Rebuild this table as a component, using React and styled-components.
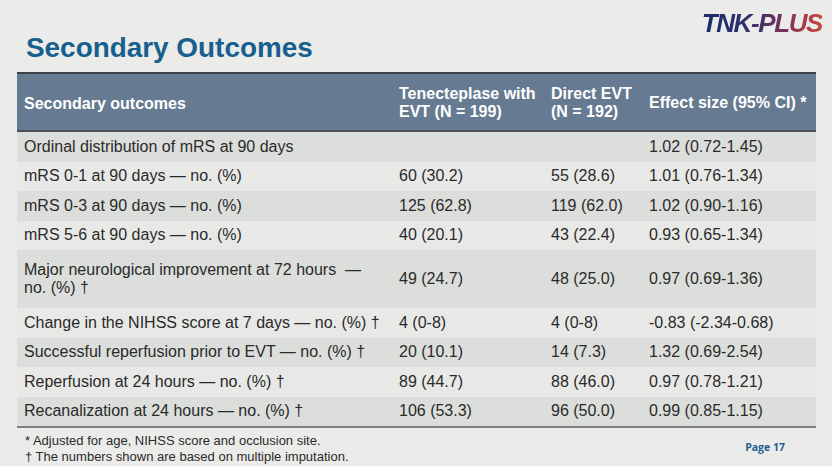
import React from "react";
import styled, { createGlobalStyle } from "styled-components";

const Global = createGlobalStyle`
  html, body { margin: 0; padding: 0; }
  body {
    background: #ebece9;
    font-family: "Liberation Sans", Arial, sans-serif;
    -webkit-font-smoothing: antialiased;
  }
`;

const Page = styled.div`
  width: 832px;
  height: 466px;
  box-sizing: border-box;
  padding: 0 16px 0 17px;
  background: linear-gradient(90deg, #efe7e9 0px, #ebece9 4px);
  overflow: hidden;
`;

const TopBar = styled.header`
  height: 72px;
  display: flex;
  justify-content: space-between;
  align-items: flex-start;
`;

const Title = styled.h1`
  margin: 0;
  padding: 32px 0 0 9px;
  font-size: 27.9px;
  line-height: 32px;
  font-weight: 700;
  color: #175f8e;
`;

const Logo = styled.div`
  margin: 10px -6px 0 0;
  font-size: 26px;
  line-height: 26px;
  font-weight: 700;
  font-style: italic;
  letter-spacing: -1.4px;
  background: linear-gradient(
    90deg,
    #1c2a6c 0%,
    #282d6e 28%,
    #4a2f66 50%,
    #7d3257 70%,
    #a83a47 86%,
    #c7483c 100%
  );
  -webkit-background-clip: text;
  background-clip: text;
  color: transparent;
`;

const Table = styled.div`
  display: grid;
  grid-template-columns: 375px 152px 98px 1fr;
  border-bottom: 2px solid #7c7f80;
`;

const HeadRow = styled.div`
  display: contents;
`;

const HeadCell = styled.div`
  background: #667a91;
  border-top: 2px solid #3e4247;
  border-bottom: 2px solid #4a5056;
  height: 56px;
  box-sizing: content-box;
  display: flex;
  align-items: center;
  padding: 0 0 0 7px;
  color: #ffffff;
  font-size: 16px;
  font-weight: 700;
  line-height: 18px;
  span { padding-top: ${(p) => (p.$low ? "4px" : "1px")}; }
`;

const Cell = styled.div`
  background: ${(p) => (p.$shade ? "#dcdedb" : "#e8e9e7")};
  min-height: ${(p) => (p.$tall ? "58px" : "29.5px")};
  display: flex;
  align-items: center;
  padding-left: 7px;
  font-size: 16px;
  line-height: 18.5px;
  color: #2a2a2a;
  white-space: nowrap;
`;

const Footer = styled.footer`
  display: flex;
  justify-content: space-between;
  align-items: flex-start;
  padding: 4.5px 31px 0 8px;
`;

const Notes = styled.div`
  font-size: 13px;
  line-height: 16.5px;
  color: #2a2a2a;
`;

const PageNo = styled.div`
  margin-top: 7px;
  font-family: "Open Sans", "Noto Sans", sans-serif;
  font-size: 10.5px;
  font-weight: 700;
  color: #1f5f93;
`;

const rows = [
  ["Ordinal distribution of mRS at 90 days", "", "", "1.02 (0.72-1.45)"],
  ["mRS 0-1 at 90 days — no. (%)", "60 (30.2)", "55 (28.6)", "1.01 (0.76-1.34)"],
  ["mRS 0-3 at 90 days — no. (%)", "125 (62.8)", "119 (62.0)", "1.02 (0.90-1.16)"],
  ["mRS 5-6 at 90 days — no. (%)", "40 (20.1)", "43 (22.4)", "0.93 (0.65-1.34)"],
  [
    <>Major neurological improvement at 72 hours &nbsp;—<br />no. (%) †</>,
    "49 (24.7)",
    "48 (25.0)",
    "0.97 (0.69-1.36)",
    true,
  ],
  ["Change in the NIHSS score at 7 days — no. (%) †", "4 (0-8)", "4 (0-8)", "-0.83 (-2.34-0.68)"],
  ["Successful reperfusion prior to EVT — no. (%) †", "20 (10.1)", "14 (7.3)", "1.32 (0.69-2.54)"],
  ["Reperfusion at 24 hours — no. (%) †", "89 (44.7)", "88 (46.0)", "0.97 (0.78-1.21)"],
  ["Recanalization at 24 hours — no. (%) †", "106 (53.3)", "96 (50.0)", "0.99 (0.85-1.15)"],
];

export default function App() {
  return (
    <>
      <Global />
      <Page>
        <TopBar>
          <Title>Secondary Outcomes</Title>
          <Logo>TNK-PLUS</Logo>
        </TopBar>
        <Table>
          <HeadRow>
            <HeadCell $low><span>Secondary outcomes</span></HeadCell>
            <HeadCell><span>Tenecteplase with<br />EVT (N = 199)</span></HeadCell>
            <HeadCell><span>Direct EVT<br />(N = 192)</span></HeadCell>
            <HeadCell><span>Effect size (95% CI) *</span></HeadCell>
          </HeadRow>
          {rows.map((r, i) => (
            <React.Fragment key={i}>
              {r.slice(0, 4).map((c, j) => (
                <Cell key={j} $shade={i % 2 === 0} $tall={r[4]}>
                  {c}
                </Cell>
              ))}
            </React.Fragment>
          ))}
        </Table>
        <Footer>
          <Notes>
            * Adjusted for age, NIHSS score and occlusion site.
            <br />† The numbers shown are based on multiple imputation.
          </Notes>
          <PageNo>Page 17</PageNo>
        </Footer>
      </Page>
    </>
  );
}
